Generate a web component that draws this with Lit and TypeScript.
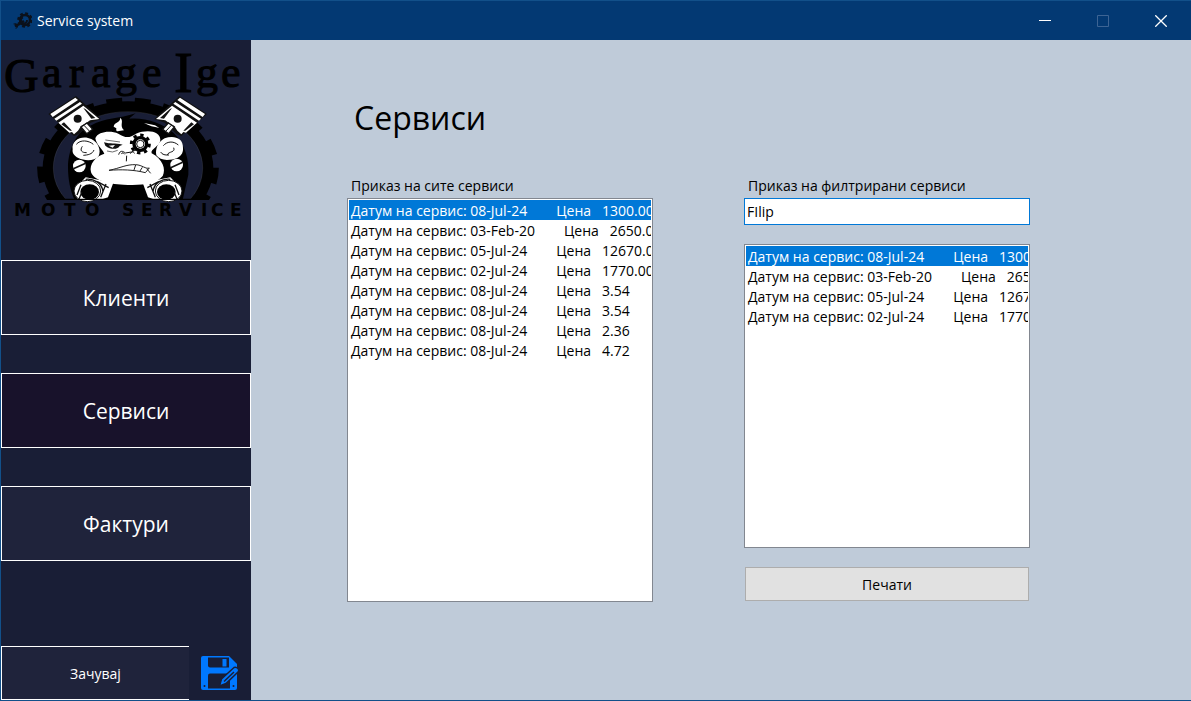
import { LitElement, html, css, svg } from "lit";
import { customElement, state } from "lit/decorators.js";

interface ServiceRecord {
  date: string;
  price: string;
}

const NBSP = "\u00a0";

const ALL_SERVICES: ServiceRecord[] = [
  { date: "08-Jul-24", price: "1300.00" },
  { date: "03-Feb-20", price: "2650.00" },
  { date: "05-Jul-24", price: "12670.00" },
  { date: "02-Jul-24", price: "1770.00" },
  { date: "08-Jul-24", price: "3.54" },
  { date: "08-Jul-24", price: "3.54" },
  { date: "08-Jul-24", price: "2.36" },
  { date: "08-Jul-24", price: "4.72" },
];

const describe = (s: ServiceRecord) =>
  `Датум на сервис: ${s.date}${NBSP.repeat(8)}Цена${NBSP.repeat(3)}${s.price}`;

@customElement("garage-logo")
class GarageLogo extends LitElement {
  static styles = css`
    :host {
      display: block;
    }
    .logo {
      display: block;
      width: 100%;
      height: auto;
      overflow: visible;
    }
    .script {
      font-family: "Liberation Serif", serif;
    }
    .plate {
      font-family: "DejaVu Sans", sans-serif;
      font-weight: bold;
    }
  `;

  private piston() {
    return svg`
      <path d="M145 42L228-12L303 57L272 68L237 102L222 108Z" fill="#111"/>
      <path d="M151 42L226-7L234 0L158 51Z M163 56L240 6L246 11L169 62Z" fill="#fff"/>
      <path d="M175 68L250 17L298 57L270 61L258 70L243 78L234 92L222 103L216 96L208 98Z" fill="#fff"/>
      <path d="M184 73L192 67L216 92L210 92Z M250 24L256 27L286 54L274 56Z" fill="#111"/>
      <circle cx="233" cy="56" r="12" fill="#111"/>
      <path d="M243 81L261 69L278 88L260 101Z" fill="#fff" stroke="#111" stroke-width="4"/>
      <path d="M252 76L270 95" stroke="#111" stroke-width="3"/>`;
  }

  private rod() {
    return svg`
      <path d="M232 258L257 232L340 248L324 292L300 300L232 300Z" fill="#fff"/>
      <ellipse cx="262" cy="273" rx="40" ry="32" fill="#fff" stroke="#111" stroke-width="3"/>
      <ellipse cx="269" cy="276" rx="28" ry="23" fill="#000"/>
      <path d="M237 297L246 276M231 285L243 254M257 238C282 235 306 249 309 275M292 245L326 263M318 252L302 292" fill="none" stroke="#111" stroke-width="4"/>`;
  }

  render() {
    return html`
      <svg class="logo" viewBox="1 40 250 180" role="img" aria-label="Garage Ige Moto Service">
        <defs>
          <clipPath id="base"><rect x="0" y="-60" width="768" height="360" /></clipPath>
        </defs>
        <g transform="translate(0 100) scale(.33333)">
          <g clip-path="url(#base)">
            <ellipse cx="384" cy="204" rx="240" ry="184" fill="none" stroke="#000" stroke-width="32" />
            <ellipse cx="384" cy="204" rx="260" ry="199" fill="none" stroke="#000" stroke-width="25" stroke-dasharray="47 38" />
            <ellipse cx="384" cy="204" rx="224" ry="169" fill="none" stroke="#4b4e5b" stroke-width="1" />
            <path d="M204 200C205 158 222 98 274 76C314 53 357 57 407 40C398 47 393 51 388 56C430 51 492 69 522 100C557 134 568 183 565 224L548 300L224 300C211 272 204 238 204 200Z" fill="#000" />
          </g>
          <path d="M341 80C342 66 361 69 361 53C373 65 357 75 372 91C360 91 346 101 349 85Z" fill="#fff" />
          <path d="M432 69L465 76L478 84C461 80 448 78 432 69Z" fill="#fff" />
          ${this.piston()}
          <g transform="translate(766 0) scale(-1 1)">${this.piston()}</g>
          ${this.rod()}
          <g transform="translate(768 0) scale(-1 1)">${this.rod()}</g>
          <path d="M218 148C213 118 249 104 274 117C295 127 304 151 296 168C284 184 254 183 235 174C223 168 216 160 218 148Z" fill="#fff" />
          <path d="M549 143C550 113 520 105 494 115C474 125 465 147 469 166C481 184 511 182 533 173C546 166 550 155 549 143Z" fill="#fff" />
          <path d="M229 133C241 118 266 121 280 133M247 139C239 151 244 158 260 158M250 166C263 165 277 163 282 150M535 135C519 121 500 125 490 137M521 143C527 158 507 153 501 165M482 156C486 164 496 166 507 165" fill="none" stroke="#161616" stroke-width="3" />
          <path d="M286 115C294 94 332 91 355 101C379 116 389 113 408 101C442 87 482 93 481 120C480 139 450 147 455 160C488 177 499 208 488 228C469 253 419 257 371 254C321 252 280 240 273 216C267 193 287 168 313 161C305 144 289 134 286 115Z" fill="#fff" />
          <path d="M312 127C331 133 344 128 368 134L359 138C354 149 332 150 316 137Z" fill="#111" />
          <path d="M326 137L345 135L338 143Z" fill="#fff" />
          <path d="M321 153Q338 160 353 151M316 120L360 126" fill="none" stroke="#222" stroke-width="2" />
          <circle cx="421" cy="132" r="24" fill="#000" />
          <circle cx="421" cy="132" r="27" fill="none" stroke="#000" stroke-width="9" stroke-dasharray="10 11" />
          <circle cx="421" cy="132" r="14" fill="#fff" />
          <circle cx="421" cy="132" r="11" fill="none" stroke="#111" stroke-width="3" />
          <path d="M356 164C360 150 369 153 376 159L395 156C405 148 414 151 419 160M364 161Q370 154 374 163M391 161Q396 151 404 160M380 167L379 184" fill="none" stroke="#111" stroke-width="3" />
          <path d="M327 211C362 204 378 193 407 194C427 195 437 208 448 204L436 218C402 209 363 208 327 211ZM407 195L402 210M427 202L420 213M440 206L452 220" fill="none" stroke="#222" stroke-width="3" />
          <g fill="#fff">
            <circle cx="238" cy="198" r="19" />
            <circle cx="530" cy="195" r="19" />
          </g>
          <path d="M220 206L257 190M512 203L548 187" stroke="#111" stroke-width="5" />
          <path d="M147 298H623" stroke="#000" stroke-width="4" />
        </g>
        <g class="script" fill="#000" stroke="#000" stroke-width="1">
          <text y="92" font-size="48" x="4">G</text>
          <text y="87" font-size="44" x="42 69 91 115 142">arage</text>
          <text y="92" font-size="56" x="174">I</text>
          <text y="87" font-size="44" x="196 221">ge</text>
        </g>
        <g class="plate" fill="#000">
          <text y="216" font-size="17" x="14 41 64 85">MOTO</text>
          <text y="216" font-size="17" x="122 141 159 179 201 211 230">SERVICE</text>
        </g>
      </svg>
    `;
  }
}

@customElement("service-list")
class ServiceList extends LitElement {
  static properties = {
    items: { attribute: false },
    label: { type: String },
  };
  declare items: ServiceRecord[];
  declare label: string;

  static styles = css`
    :host {
      display: flex;
      flex: 1;
      min-width: 0;
      min-height: 160px;
    }
    .list {
      appearance: none;
      box-sizing: border-box;
      width: 100%;
      min-width: 0;
      margin: 0;
      padding: 1px;
      border: 1px solid #828790;
      border-radius: 0;
      outline: none;
      background: #fff;
      color: #000;
      font-family: inherit;
      font-size: 14px;
      overflow: hidden;
    }
    .row {
      box-sizing: border-box;
      min-height: 20px;
      height: 20px;
      padding: 1px 2px 0;
      line-height: 20px;
      overflow: hidden;
    }
    .row:checked {
      background: linear-gradient(#0078d7, #0078d7);
      -webkit-text-fill-color: #fff;
    }
  `;

  render() {
    return html`
      <select class="list" size="10" aria-label=${this.label}>
        ${this.items.map(
          (s, i) => html`<option class="row" value=${i} ?selected=${i === 0}>${describe(s)}</option>`,
        )}
      </select>
    `;
  }
}

@customElement("app-root")
class AppRoot extends LitElement {
  @state() private page = "Сервиси";

  static styles = css`
    :host {
      display: flex;
      flex-direction: column;
      box-sizing: border-box;
      min-height: 100vh;
      border: 1px solid #12508a;
      border-right-width: 0;
      background: #bfcbd9;
      color: #000;
      font-family: "Open Sans", "Noto Sans", sans-serif;
      font-size: 14px;
      line-height: 20px;
    }
    button {
      margin: 0;
      padding: 0;
      border-radius: 0;
      font-family: inherit;
      cursor: pointer;
    }
    .titlebar {
      display: flex;
      align-items: center;
      height: 39px;
      padding: 0 1px 0 11px;
      background: #033973;
      color: #fff;
    }
    .app-icon {
      width: 20px;
      height: 18px;
      margin-right: 5px;
    }
    .app-name {
      flex: 1;
    }
    .win {
      display: grid;
      place-items: center;
      width: 58px;
      height: 39px;
      border: 0;
      background: transparent;
      color: #fff;
    }
    .win:disabled {
      color: #3d6494;
    }
    .body {
      display: flex;
      flex: 1;
    }
    .sidebar {
      display: flex;
      flex-direction: column;
      flex: none;
      width: 250px;
      background: #191e36;
    }
    .nav {
      display: flex;
      flex-direction: column;
      gap: 38px;
      margin: 40px 0;
    }
    .nav-item {
      height: 75px;
      border: 1px solid #fff;
      background: #1f233b;
      color: #fff;
      font-size: 21px;
    }
    .nav-item[aria-current="page"] {
      background: #18122b;
    }
    .footer {
      display: flex;
      margin-top: auto;
      height: 54px;
    }
    .save {
      flex: 1;
      border: 1px solid #fff;
      border-right: 0;
      background: #1f233b;
      color: #fff;
      font-size: 14px;
    }
    .save-icon {
      display: grid;
      place-items: center;
      width: 62px;
      border: 0;
      background: transparent;
    }
    .main {
      display: flex;
      flex-direction: column;
      flex: 1;
      min-width: 0;
      padding: 52px 161px 98px 96px;
    }
    .heading {
      margin: 0 0 32px 7px;
      font-size: 32px;
      line-height: 52px;
      font-weight: 400;
    }
    .columns {
      display: grid;
      grid-template-columns: minmax(0, 306fr) minmax(0, 286fr);
      gap: 91px;
      flex: 1;
    }
    .column {
      display: flex;
      flex-direction: column;
      min-width: 0;
    }
    .label {
      padding: 0 4px 2px;
    }
    .filter {
      box-sizing: border-box;
      width: 100%;
      height: 27px;
      margin: 0 0 19px;
      padding: 0 2px;
      border: 1px solid #0078d7;
      border-radius: 0;
      outline: none;
      background: #fff;
      color: #000;
      font-family: inherit;
      font-size: 14px;
    }
    .print {
      height: 34px;
      margin: 19px 1px 1px;
      border: 1px solid #adadad;
      background: #e1e1e1;
      color: #000;
      font-size: 14px;
    }
  `;

  private titleIcon() {
    return html`
      <svg class="app-icon" viewBox="0 0 20 18" aria-hidden="true">
        <circle cx="13" cy="8" r="5" fill="none" stroke="#0b111b" stroke-width="2.5" />
        <circle cx="13" cy="8" r="6.6" fill="none" stroke="#0b111b" stroke-width="2.4" stroke-dasharray="2.8 2.38" />
        <path d="M3 14.5L12 9" stroke="#0b111b" stroke-width="2.6" />
        <path d="M11 5.5A3 3 0 1 0 15 8" fill="none" stroke="#0b111b" stroke-width="1.8" />
        <path d="M1 12L3.5 13L4.5 15.5L3 17A3.4 3.4 0 0 0 6 12.5A3.4 3.4 0 0 0 1 12Z" fill="#0b111b" />
      </svg>
    `;
  }

  render() {
    return html`
      <header class="titlebar">
        ${this.titleIcon()}
        <span class="app-name">Service system</span>
        <button class="win" aria-label="Minimize">
          <svg width="12" height="12" viewBox="0 0 12 12"><path d="M0 5.5H12" stroke="currentColor" /></svg>
        </button>
        <button class="win" aria-label="Maximize" disabled>
          <svg width="12" height="12" viewBox="0 0 12 12"><path d="M.5.5H11.5V11.5H.5Z" fill="none" stroke="currentColor" /></svg>
        </button>
        <button class="win" aria-label="Close">
          <svg width="12" height="12" viewBox="0 0 12 12"><path d="M.3.3L11.7 11.7M11.7.3L.3 11.7" stroke="currentColor" stroke-width="1.3" /></svg>
        </button>
      </header>
      <div class="body">
        <aside class="sidebar">
          <garage-logo></garage-logo>
          <nav class="nav">
            ${["Клиенти", "Сервиси", "Фактури"].map(
              (name) => html`
                <button
                  class="nav-item"
                  aria-current=${this.page === name ? "page" : "false"}
                  @click=${() => (this.page = name)}
                >${name}</button>
              `,
            )}
          </nav>
          <div class="footer">
            <button class="save">Зачувај</button>
            <button class="save-icon" aria-label="Зачувај промени">
              <svg width="38" height="35" viewBox="0 0 38 35" aria-hidden="true">
                <path d="M2 0H28L36 8V32Q36 34 34 34H2Q0 34 0 32V2Q0 0 2 0Z" fill="#0078ff" />
                <path d="M7 1.5H28V11.5H9Q7 11.5 7 9.5Z" fill="#191e36" />
                <rect x="21.5" y="3" width="4" height="7.5" fill="#0078ff" />
                <path d="M9 17.5H29V32.5H7V19.5Q7 17.5 9 17.5Z" fill="#191e36" />
                <path d="M18.5 30L20.5 23L33 11.5Q35 10.5 37 12.5Q38.5 14.5 37 16L25 27.5Z" fill="#0078ff" stroke="#191e36" stroke-width="1.5" />
                <path d="M23 25.5L33 16" fill="none" stroke="#191e36" stroke-width="1.5" />
                <circle cx="3.5" cy="30" r="1" fill="#191e36" />
                <circle cx="32.5" cy="30" r="1" fill="#191e36" />
              </svg>
            </button>
          </div>
        </aside>
        <main class="main">
          <h1 class="heading">Сервиси</h1>
          <div class="columns">
            <section class="column">
              <span class="label">Приказ на сите сервиси</span>
              <service-list label="Приказ на сите сервиси" .items=${ALL_SERVICES}></service-list>
            </section>
            <section class="column">
              <label class="label" for="filter">Приказ на филтрирани сервиси</label>
              <input class="filter" id="filter" type="text" value="FIlip" />
              <service-list label="Филтрирани сервиси" .items=${ALL_SERVICES.slice(0, 4)}></service-list>
              <button class="print">Печати</button>
            </section>
          </div>
        </main>
      </div>
    `;
  }
}
